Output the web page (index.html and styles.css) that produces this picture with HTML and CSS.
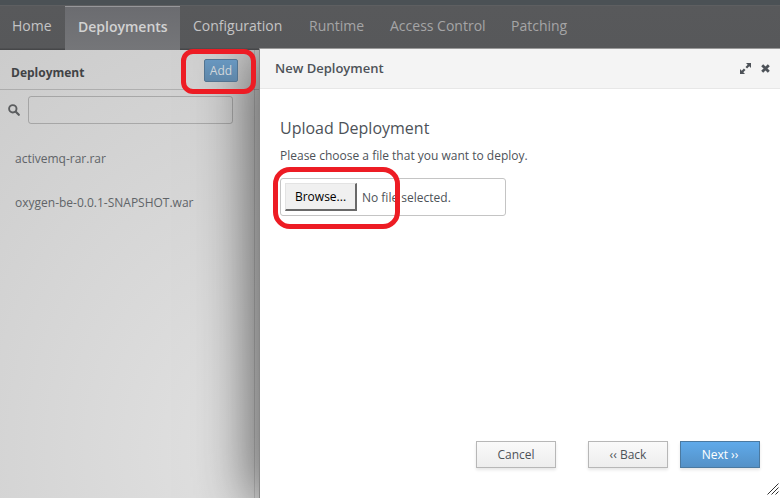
FILE: index.html
```
<!DOCTYPE html>
<html lang="en">
<head>
<meta charset="utf-8">
<title>Deployments</title>
<link rel="stylesheet" href="styles.css">
</head>
<body>
<div class="app">
  <nav class="nav">
    <a class="tab tab-home">Home</a>
    <a class="tab active">Deployments</a>
    <a class="tab bright tab-config">Configuration</a>
    <a class="tab tab-runtime">Runtime</a>
    <a class="tab tab-access">Access Control</a>
    <a class="tab">Patching</a>
  </nav>
  <aside class="sidebar">
    <header class="side-head"><strong>Deployment</strong><button class="add">Add</button></header>
    <div class="search">
      <svg width="12" height="12" viewBox="0 0 12 12"><circle cx="4.8" cy="4.8" r="3.7" fill="none" stroke="#5b5d5f" stroke-width="1.9"/><path d="M7.8 7.8L10.8 10.8" stroke="#5b5d5f" stroke-width="2.2" stroke-linecap="round"/></svg>
      <input class="field" type="text" aria-label="Filter">
    </div>
    <ul class="list"><li>activemq-rar.rar</li><li>oxygen-be-0.0.1-SNAPSHOT.war</li></ul>
  </aside>
</div>
<section class="dialog">
  <header class="dialog-head">
    <span class="dialog-title">New Deployment</span>
    <svg class="expand" width="11" height="11" viewBox="0 0 11 11"><path d="M6 0H11V5L9.3 3.3L7.1 5.5L5.5 3.9L7.7 1.7ZM5 11H0V6L1.7 7.7L3.9 5.5L5.5 7.1L3.3 9.3Z" fill="#4d5258"/></svg>
    <svg width="9" height="9" viewBox="0 0 9 9"><path d="M1.2 1.2L7.8 7.8M7.8 1.2L1.2 7.8" stroke="#4d5258" stroke-width="2.8"/></svg>
  </header>
  <div class="content">
    <h1><span>Upload Deployment</span></h1>
    <p>Please choose a file that you want to deploy.</p>
    <div class="file"><button class="browse">Browse...</button><span>No file selected.</span></div>
  </div>
  <footer class="actions">
    <button class="btn cancel">Cancel</button><button class="btn back">‹‹ Back</button><button class="btn primary">Next ››</button>
  </footer>
  <svg class="grip" width="12" height="12" viewBox="0 0 12 12"><path d="M0.5 11.5L11.5 0.5M4.5 11.5L11.5 4.5M8.5 11.5L11.5 8.5" stroke="#333" stroke-width="1"/></svg>
</section>
<div class="mark mark-add"></div>
<div class="mark mark-browse"></div>
</body>
</html>
```

FILE: styles.css
```
* { box-sizing: border-box; }
body { margin: 0; width: 780px; height: 498px; overflow: hidden; position: relative; font: 12px/18px "Open Sans", sans-serif; color: #4d5258; background: #d5d5d5; }
button { font: inherit; padding: 0; }
.app { display: flex; flex-direction: column; height: 498px; }
.nav { display: flex; height: 50px; border-top: 5px solid #4b5155; background: linear-gradient(#646567 0, #58595b 1px, #57585a 43px, #464749 44px); font-size: 14px; color: #a5a5a6; }
.tab { padding: 12px 13px 0; height: 45px; white-space: nowrap; line-height: 18px; }
.tab-home { width: 65px; padding-left: 12px; color: #c4c4c5; }
.tab.active { width: 115px; padding-top: 11px; margin-top: 1px; height: 44px; border-top: 1px solid #97979a; background: linear-gradient(#6b6c70, #757679); color: #d2d2d2; font-weight: 600; }
.tab.bright { color: #c4c4c5; }
.tab-config { width: 116px; }
.tab-runtime { width: 81px; }
.tab-access { width: 121px; }
.sidebar { flex: 1; width: 260px; position: relative; overflow: hidden; background: linear-gradient(rgba(0,0,0,.12), rgba(0,0,0,.12)) 254px 0 / 1px 100% no-repeat, radial-gradient(ellipse 500px 600px at 260px 400px, #e2e2e2, #c8c8c8); }
/* shadow cast by the dialog on the dimmed panel */
.sidebar::before { content: ""; position: absolute; left: 260px; top: 8px; bottom: 2px; width: 520px; box-shadow: 0 0 54px 8px rgba(0,0,0,.6); }
.side-head { position: relative; display: flex; justify-content: space-between; height: 40px; padding: 9px 22px 0 11px; border-bottom: 1px solid rgba(0,0,0,.16); }
.side-head strong { line-height: 27px; color: #414345; }
.add { width: 34px; height: 23px; border: 1px solid #527491; border-radius: 2px; background: linear-gradient(#6897c0, #5e86a8); color: #d1d6da; line-height: 20px; }
.search { position: relative; display: flex; align-items: center; gap: 8px; padding: 6px 0 0 8px; height: 34px; }
.field { width: 205px; height: 28px; border: 1px solid rgba(0,0,0,.2); border-radius: 3px; background: transparent; }
.list { position: relative; list-style: none; margin: 0; padding: 26px 15px; color: #606468; }
.list li { height: 44px; white-space: nowrap; }
.dialog { position: absolute; left: 260px; top: 48px; width: 520px; height: 450px; display: flex; flex-direction: column; background: #fff; border-top: 1px solid #999; box-shadow: -1px 0 #898989; }
.dialog-head { display: flex; align-items: center; height: 40px; padding: 0 10px 0 15px; background: #f4f4f4; border-bottom: 1px solid #e7e7e7; }
.dialog-title { flex: 1; font-size: 13px; font-weight: 600; padding-bottom: 2px; }
.expand { margin-right: 10px; }
.content { padding: 27px 20px 0; flex: 1; }
h1 { margin: 0; font-size: 16px; line-height: 24px; font-weight: 400; }
p { margin: 7px 0 13px; }
.file { display: flex; align-items: center; width: 226px; height: 38px; border: 1px solid #c4c4c4; border-radius: 3px; padding-left: 4px; gap: 5px; }
.browse { width: 72px; height: 28px; background: #f0f0f0; border: 1px solid #e3e3e3; border-right: 2px solid #696969; border-bottom: 2px solid #696969; color: #000; }
.file span { padding-top: 1px; }
.actions { display: flex; height: 57px; padding-left: 216px; }
.btn { width: 80px; height: 27px; border: 1px solid #b7b7b7; background: linear-gradient(#fafafa, #ededed); color: #4d5258; line-height: 25px; box-shadow: 0 2px 3px rgba(3,3,3,.1); }
.back { margin-left: 32px; }
.primary { margin-left: 12px; border-color: #4b79a0; background: linear-gradient(#60aaea, #5491c7); color: #fff; }
.grip { position: absolute; right: 1px; bottom: 3px; }
.mark { position: absolute; border: 5px solid #ed1c24; }
.mark-add { left: 181px; top: 49px; width: 75px; height: 45px; border-radius: 12px; }
.mark-browse { left: 273px; top: 167px; width: 127px; height: 62px; border-radius: 17px; }
```
